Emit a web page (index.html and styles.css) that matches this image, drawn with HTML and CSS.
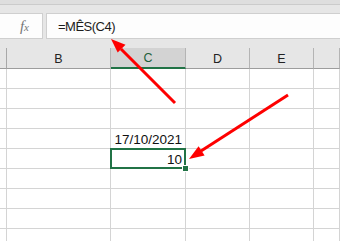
FILE: index.html
```
<html>
	<head>
		<meta charset="utf-8">
		<title>MÊS</title>
		<link rel="stylesheet" href="styles.css">
	</head>
	<body>
		<div class="sheet">
			<div class="ribbon-edge"></div>
			<div class="formula-bar">
				<div class="fx-box"><span class="fx">f<span class="fx-x">x</span></span></div>
				<div class="formula-input">=MÊS(C4)</div>
			</div>
			<div class="grid">
				<div class="hd rh"></div>
				<div class="hd">B</div>
				<div class="hd active">C</div>
				<div class="hd">D</div>
				<div class="hd">E</div>
				<div class="hd"></div>

				<div class="cl rh"></div><div class="cl"></div><div class="cl"></div><div class="cl"></div><div class="cl"></div><div class="cl"></div>
				<div class="cl rh"></div><div class="cl"></div><div class="cl"></div><div class="cl"></div><div class="cl"></div><div class="cl"></div>
				<div class="cl rh"></div><div class="cl"></div><div class="cl"></div><div class="cl"></div><div class="cl"></div><div class="cl"></div>
				<div class="cl rh"></div><div class="cl"></div><div class="cl num">17/10/2021</div><div class="cl"></div><div class="cl"></div><div class="cl"></div>
				<div class="cl rh"></div><div class="cl"></div><div class="cl num selected">10<span class="handle"></span></div><div class="cl"></div><div class="cl"></div><div class="cl"></div>
				<div class="cl rh"></div><div class="cl"></div><div class="cl"></div><div class="cl"></div><div class="cl"></div><div class="cl"></div>
				<div class="cl rh"></div><div class="cl"></div><div class="cl"></div><div class="cl"></div><div class="cl"></div><div class="cl"></div>
				<div class="cl rh"></div><div class="cl"></div><div class="cl"></div><div class="cl"></div><div class="cl"></div><div class="cl"></div>
				<div class="cl rh"></div><div class="cl"></div><div class="cl"></div><div class="cl"></div><div class="cl"></div><div class="cl"></div>
			</div>
			<svg class="arrows" width="340" height="241" viewBox="0 0 340 241">
				<line x1="175" y1="103" x2="121" y2="49" stroke="#fe0000" stroke-width="3"/>
				<polygon points="111,39 125.5,44.7 117.7,52.5" fill="#fe0000"/>
				<line x1="288" y1="95" x2="201" y2="151" stroke="#fe0000" stroke-width="3"/>
				<polygon points="189,159 204.6,155.5 198.6,146.3" fill="#fe0000"/>
			</svg>
		</div>
	</body>
</html>
```
FILE: styles.css
```
body {
  margin: 0;
  font-family: "Liberation Sans", Arial, sans-serif;
  background-color: #ffffff;
}

.sheet {
  position: relative;
  width: 340px;
  height: 241px;
  overflow: hidden;
}

.ribbon-edge {
  height: 4px;
  background-color: #dedede;
  border-bottom: 1px solid #cbcbcb;
}

.formula-bar {
  display: flex;
  gap: 3px;
  padding: 8px 0 9px 0;
  background-color: #e6e6e6;
}

.fx-box, .formula-input {
  height: 26px;
  box-sizing: border-box;
  border: 1px solid #cfcfcf;
  background-color: #fdfdfd;
}

.fx-box {
  width: 44px;
  margin-left: -1px;
  display: flex;
  justify-content: flex-end;
  align-items: center;
  padding-right: 13px;
  box-sizing: border-box;
}

.fx {
  font-family: "Liberation Serif", serif;
  font-style: italic;
  font-size: 15px;
  color: #767676;
}

.fx-x {
  font-size: 11px;
}

.formula-input {
  flex: 1;
  margin-right: -4px;
  padding: 4px 0 0 11px;
  font-size: 13px;
  letter-spacing: -0.5px;
  line-height: 18px;
  color: #1c1c1c;
}

.grid {
  display: grid;
  grid-template-columns: 7px 104px 75px 64px 64px 1fr;
  grid-auto-rows: 20px;
  grid-template-rows: 21px;
}

.hd {
  box-sizing: border-box;
  background-color: #e6e6e6;
  border-right: 1px solid #b4b4b4;
  border-bottom: 1px solid #9d9d9d;
  font-size: 12.5px;
  color: #222222;
  display: flex;
  align-items: center;
  justify-content: center;
  padding-top: 1px;
}

.hd.rh {
  border-right-color: #a8a8a8;
}

.hd.active {
  background-color: #d3d3d3;
  border-bottom: 2px solid #217346;
  color: #1e5f3b;
}

.cl {
  box-sizing: border-box;
  border-right: 1px solid #d4d4d4;
  border-bottom: 1px solid #d4d4d4;
  font-size: 13.5px;
  color: #111111;
}

.cl.num {
  display: flex;
  justify-content: flex-end;
  align-items: flex-end;
  padding-right: 3px;
  line-height: 17px;
}

.cl.selected {
  position: relative;
}

.cl.selected::after {
  content: "";
  position: absolute;
  left: -1px;
  top: -1px;
  right: -1px;
  bottom: -1px;
  border: 2px solid #217346;
}

.handle {
  position: absolute;
  right: -4px;
  bottom: -4px;
  width: 5px;
  height: 5px;
  background-color: #217346;
  border: 1px solid #ffffff;
  z-index: 1;
}

.arrows {
  position: absolute;
  left: 0;
  top: 0;
}
```
